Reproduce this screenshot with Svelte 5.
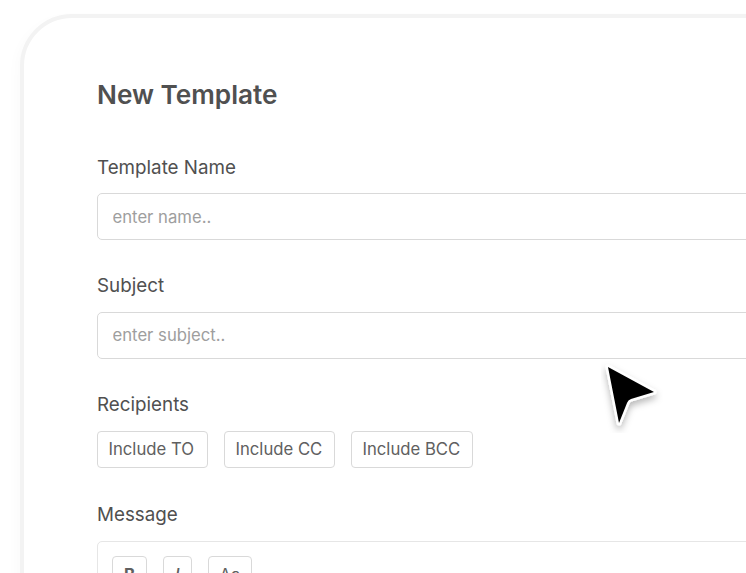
<script>
  const recipients = ['Include TO', 'Include CC', 'Include BCC'];
  const tools = [
    { label: 'B', cls: 'bold' },
    { label: 'I', cls: 'italic' },
    { label: 'Aa', cls: '' }
  ];
</script>

<div class="stage">
  <div class="card">
    <h1>New Template</h1>

    <label class="field-label first" for="tname">Template Name</label>
    <input id="tname" class="text-input" placeholder="enter name.." />

    <label class="field-label" for="subject">Subject</label>
    <input id="subject" class="text-input" placeholder="enter subject.." />

    <div class="field-label">Recipients</div>
    <div class="chips">
      {#each recipients as r}
        <button class="chip">{r}</button>
      {/each}
    </div>

    <div class="field-label message">Message</div>
    <div class="editor">
      <div class="toolbar">
        {#each tools as t}
          <button class="tool {t.cls}">{t.label}</button>
        {/each}
      </div>
    </div>
  </div>

  <svg class="cursor" width="62" height="72" viewBox="0 0 62 72" aria-hidden="true">
    <defs>
      <filter id="sh" x="-30%" y="-30%" width="170%" height="170%">
        <feDropShadow dx="0" dy="4" stdDeviation="3.5" flood-color="#000" flood-opacity="0.28" />
      </filter>
    </defs>
    <path d="M7 6 L53 31 L30 38 Q27 39 26 42 L18 62 Z" fill="#000" stroke="#fff" stroke-width="5" stroke-linejoin="round" paint-order="stroke" filter="url(#sh)" />
  </svg>
</div>

<style>
  :global(body) {
    margin: 0;
    background: #fff;
  }
  .stage {
    position: relative;
    width: 746px;
    height: 573px;
    overflow: hidden;
    background: #fff;
    font-family: Inter, "Liberation Sans", sans-serif;
    color: #4a4a4a;
  }
  .card {
    box-sizing: border-box;
    width: 900px;
    height: 800px;
    margin: 14px 0 0 20px;
    padding: 61px 0 0 73px;
    border: 4px solid #f3f3f3;
    border-radius: 52px;
    background: #fff;
    box-shadow: -4px 4px 12px rgba(0, 0, 0, 0.02);
  }
  h1 {
    margin: 0;
    font-size: 26.2px;
    line-height: 32px;
    font-weight: 600;
    color: #505050;
  }
  .field-label {
    display: block;
    margin-top: 34px;
    font-size: 18.8px;
    line-height: 24px;
    font-weight: 400;
    color: #505050;
  }
  .field-label.first {
    margin-top: 44.5px;
  }
  .text-input {
    display: block;
    box-sizing: border-box;
    width: 760px;
    height: 47px;
    margin-top: 13.5px;
    padding: 0 14.5px;
    border: 1px solid #d9d9d9;
    border-radius: 5px;
    background: #fff;
    font: 400 16.7px Inter, "Liberation Sans", sans-serif;
    outline: none;
  }
  .text-input::placeholder {
    color: #9e9e9e;
    opacity: 1;
  }
  .chips {
    display: flex;
    gap: 16px;
    margin-top: 14px;
  }
  .chip {
    box-sizing: border-box;
    min-width: 111px;
    height: 37px;
    padding: 0 11.5px 0 10.5px;
    border: 1px solid #d9d9d9;
    border-radius: 4px;
    background: #fff;
    color: #606060;
    text-align: left;
    font: 400 16.7px Inter, "Liberation Sans", sans-serif;
  }
  .message {
    margin-top: 35px;
  }
  .editor {
    box-sizing: border-box;
    width: 760px;
    height: 120px;
    margin-top: 14px;
    padding: 14px 14px;
    border: 1px solid #e6e6e6;
    border-radius: 5px;
  }
  .toolbar {
    display: flex;
    gap: 16px;
  }
  .tool {
    box-sizing: border-box;
    height: 38px;
    padding: 0 11px;
    border: 1px solid #d9d9d9;
    border-radius: 4px;
    background: #fff;
    color: #606060;
    font: 400 16.7px Inter, "Liberation Sans", sans-serif;
  }
  .tool.bold {
    font-weight: 700;
  }
  .tool.italic {
    font-style: italic;
    font-weight: 500;
  }
  .cursor {
    position: absolute;
    left: 601px;
    top: 361px;
  }
</style>
